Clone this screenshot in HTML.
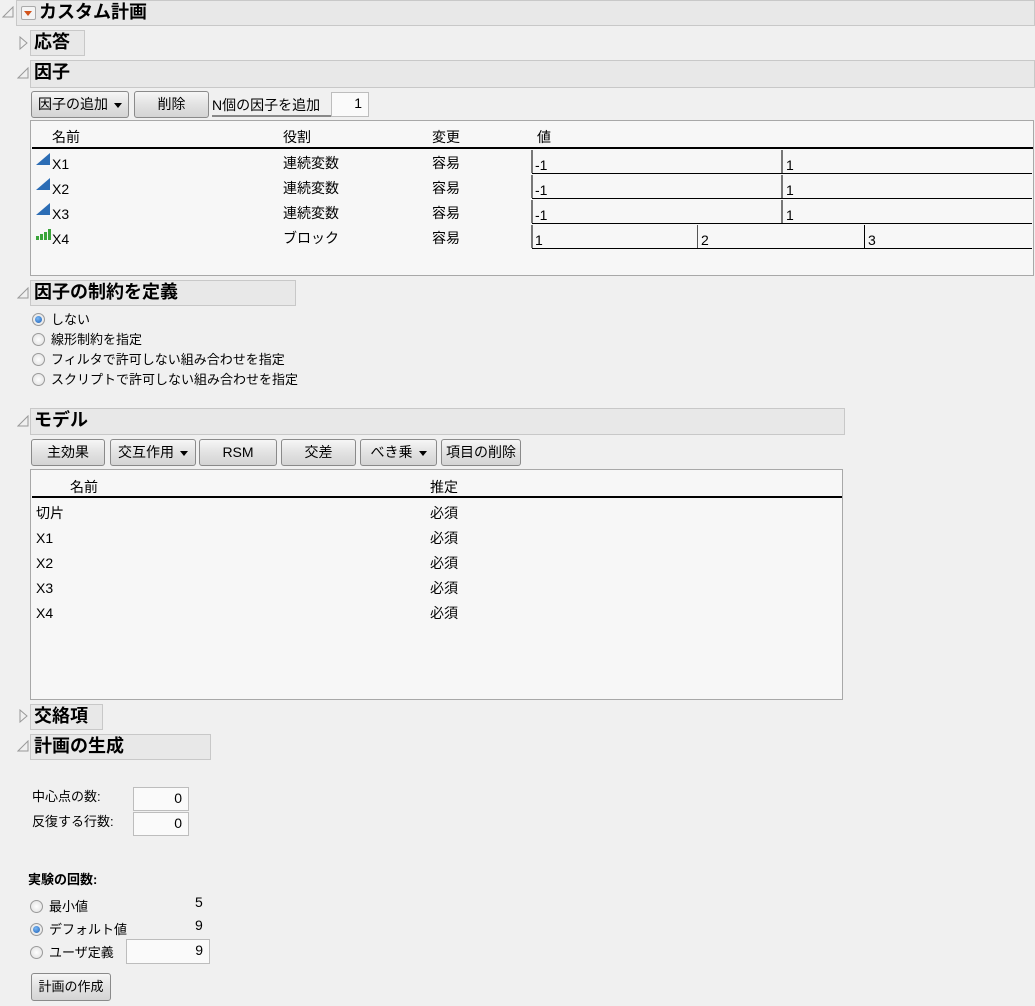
<!DOCTYPE html>
<html><head><meta charset="utf-8"><style>
*{margin:0;padding:0;box-sizing:border-box}
body{width:1035px;height:1006px;background:#f0f0f0;position:relative;overflow:hidden;font-family:"Liberation Sans","Noto Sans CJK JP",sans-serif;font-size:14px;color:#000}
.a{position:absolute;white-space:nowrap;line-height:16px}
.s{font-size:13px}
.hdr{position:absolute;background:#e8e8e8;border:1px solid #c8c8c8;font-weight:bold;font-size:18px;line-height:23px;padding-left:3px;white-space:nowrap}
.btn{position:absolute;border:1px solid #8a8a8a;border-radius:3px;background:linear-gradient(#f6f6f6,#e2e2e2 50%,#d4d4d4);text-align:center;line-height:24px;font-size:14px;white-space:nowrap}
.dd::after{content:"";display:inline-block;margin-left:6px;vertical-align:middle;border-left:4px solid transparent;border-right:4px solid transparent;border-top:5px solid #000}
.box{position:absolute;background:#f7f7f7;border:1px solid #a8a8a8}
.inp{position:absolute;background:#fafafa;border:1px solid #bdbdbd;text-align:right;padding-right:6px;line-height:21px}
.radio{position:absolute;width:13px;height:13px;border-radius:50%;border:1px solid #9a9a9a;background:radial-gradient(#fff,#ddd)}
.radio.on::after{content:"";position:absolute;left:2px;top:2px;width:7px;height:7px;border-radius:50%;background:radial-gradient(circle at 40% 35%,#7ab8f5,#1d5fb5)}
.hl{position:absolute;height:2px;background:#000}
.cl{position:absolute;height:1px;background:#000}
.vl{position:absolute;width:2px;background:#777}
</style></head><body>
<svg class="a" style="left:2px;top:6px" width="12" height="12"><path d="M11 1 L11 11 L1 11 Z" fill="none" stroke="#999"/></svg>
<div class="hdr" style="left:16px;top:0;width:1019px;height:26px;padding-left:22px">カスタム計画</div>
<div class="a" style="left:21px;top:6px;width:15px;height:14px;border:1px solid #aaa;border-radius:2px;background:#f4f4f4"></div>
<div class="a" style="left:24px;top:11px;border-left:4px solid transparent;border-right:4px solid transparent;border-top:5px solid #d2541c;line-height:0"></div>

<svg class="a" style="left:19px;top:36px" width="10" height="14"><path d="M1 1 L8 7 L1 13 Z" fill="none" stroke="#999"/></svg>
<div class="hdr" style="left:30px;top:30px;width:55px;height:26px">応答</div>

<svg class="a" style="left:17px;top:67px" width="12" height="12"><path d="M11 1 L11 11 L1 11 Z" fill="none" stroke="#999"/></svg>
<div class="hdr" style="left:30px;top:60px;width:1005px;height:28px">因子</div>
<div class="btn dd" style="left:31px;top:91px;width:98px;height:27px">因子の追加</div>
<div class="btn" style="left:134px;top:91px;width:75px;height:27px">削除</div>
<div class="a" style="left:212px;top:95px;line-height:20px;border-bottom:2px solid #888;width:119px;height:22px">N個の因子を追加</div>
<div class="inp" style="left:331px;top:92px;width:38px;height:25px">1</div>

<div class="box" style="left:30px;top:120px;width:1004px;height:156px"></div>
<div class="a" style="left:52px;top:129px">名前</div>
<div class="a" style="left:283px;top:129px">役割</div>
<div class="a" style="left:432px;top:129px">変更</div>
<div class="a" style="left:537px;top:129px">値</div>
<div class="hl" style="left:32px;top:147px;width:1001px"></div>

<svg class="a" style="left:35px;top:152px" width="16" height="14"><path d="M1 13 L15 13 L15 1 Z" fill="#2c6db5"/></svg>
<svg class="a" style="left:35px;top:177px" width="16" height="14"><path d="M1 13 L15 13 L15 1 Z" fill="#2c6db5"/></svg>
<svg class="a" style="left:35px;top:202px" width="16" height="14"><path d="M1 13 L15 13 L15 1 Z" fill="#2c6db5"/></svg>
<svg class="a" style="left:35px;top:229px" width="16" height="12"><rect x="1" y="7" width="3" height="4" fill="#3aa43a"/><rect x="5" y="5" width="3" height="6" fill="#3aa43a"/><rect x="9" y="3" width="3" height="8" fill="#3aa43a"/><rect x="13" y="0" width="3" height="11" fill="#3aa43a"/></svg>
<div class="a" style="left:52px;top:156px">X1</div><div class="a" style="left:283px;top:155px">連続変数</div><div class="a" style="left:432px;top:155px">容易</div>
<div class="a" style="left:52px;top:181px">X2</div><div class="a" style="left:283px;top:180px">連続変数</div><div class="a" style="left:432px;top:180px">容易</div>
<div class="a" style="left:52px;top:206px">X3</div><div class="a" style="left:283px;top:205px">連続変数</div><div class="a" style="left:432px;top:205px">容易</div>
<div class="a" style="left:52px;top:231px">X4</div><div class="a" style="left:283px;top:230px">ブロック</div><div class="a" style="left:432px;top:230px">容易</div>

<div class="vl" style="left:531px;top:150px;height:23px"></div><div class="vl" style="left:781px;top:150px;height:23px"></div>
<div class="vl" style="left:531px;top:175px;height:23px"></div><div class="vl" style="left:781px;top:175px;height:23px"></div>
<div class="vl" style="left:531px;top:200px;height:23px"></div><div class="vl" style="left:781px;top:200px;height:23px"></div>
<div class="vl" style="left:531px;top:225px;height:23px"></div><div class="vl" style="left:697px;top:225px;height:23px;width:1px;background:#555"></div><div class="vl" style="left:864px;top:225px;height:23px;width:1px;background:#000"></div>
<div class="cl" style="left:532px;top:173px;width:500px"></div>
<div class="cl" style="left:532px;top:198px;width:500px"></div>
<div class="cl" style="left:532px;top:223px;width:500px"></div>
<div class="cl" style="left:532px;top:248px;width:500px"></div>
<div class="a" style="left:535px;top:157px">-1</div><div class="a" style="left:786px;top:157px">1</div>
<div class="a" style="left:535px;top:182px">-1</div><div class="a" style="left:786px;top:182px">1</div>
<div class="a" style="left:535px;top:207px">-1</div><div class="a" style="left:786px;top:207px">1</div>
<div class="a" style="left:535px;top:232px">1</div><div class="a" style="left:701px;top:232px">2</div><div class="a" style="left:868px;top:232px">3</div>

<svg class="a" style="left:17px;top:287px" width="12" height="12"><path d="M11 1 L11 11 L1 11 Z" fill="none" stroke="#999"/></svg>
<div class="hdr" style="left:30px;top:280px;width:266px;height:26px">因子の制約を定義</div>
<div class="radio on" style="left:32px;top:313px"></div><div class="a s" style="left:51px;top:312px">しない</div>
<div class="radio" style="left:32px;top:333px"></div><div class="a s" style="left:51px;top:332px">線形制約を指定</div>
<div class="radio" style="left:32px;top:353px"></div><div class="a s" style="left:51px;top:352px">フィルタで許可しない組み合わせを指定</div>
<div class="radio" style="left:32px;top:373px"></div><div class="a s" style="left:51px;top:372px">スクリプトで許可しない組み合わせを指定</div>

<svg class="a" style="left:17px;top:415px" width="12" height="12"><path d="M11 1 L11 11 L1 11 Z" fill="none" stroke="#999"/></svg>
<div class="hdr" style="left:30px;top:408px;width:815px;height:27px">モデル</div>
<div class="btn" style="left:31px;top:439px;width:74px;height:27px">主効果</div>
<div class="btn dd" style="left:110px;top:439px;width:86px;height:27px">交互作用</div>
<div class="btn" style="left:199px;top:439px;width:78px;height:27px">RSM</div>
<div class="btn" style="left:281px;top:439px;width:75px;height:27px">交差</div>
<div class="btn dd" style="left:360px;top:439px;width:77px;height:27px">べき乗</div>
<div class="btn" style="left:441px;top:439px;width:80px;height:27px">項目の削除</div>

<div class="box" style="left:30px;top:469px;width:813px;height:231px"></div>
<div class="a" style="left:70px;top:479px">名前</div>
<div class="a" style="left:430px;top:479px">推定</div>
<div class="hl" style="left:32px;top:496px;width:810px"></div>
<div class="a" style="left:36px;top:505px">切片</div><div class="a" style="left:430px;top:505px">必須</div>
<div class="a" style="left:36px;top:530px">X1</div><div class="a" style="left:430px;top:530px">必須</div>
<div class="a" style="left:36px;top:555px">X2</div><div class="a" style="left:430px;top:555px">必須</div>
<div class="a" style="left:36px;top:580px">X3</div><div class="a" style="left:430px;top:580px">必須</div>
<div class="a" style="left:36px;top:605px">X4</div><div class="a" style="left:430px;top:605px">必須</div>

<svg class="a" style="left:19px;top:709px" width="10" height="14"><path d="M1 1 L8 7 L1 13 Z" fill="none" stroke="#999"/></svg>
<div class="hdr" style="left:30px;top:704px;width:73px;height:26px">交絡項</div>
<svg class="a" style="left:17px;top:740px" width="12" height="12"><path d="M11 1 L11 11 L1 11 Z" fill="none" stroke="#999"/></svg>
<div class="hdr" style="left:30px;top:734px;width:181px;height:26px">計画の生成</div>

<div class="a s" style="left:32px;top:789px">中心点の数:</div>
<div class="inp" style="left:133px;top:787px;width:56px;height:24px">0</div>
<div class="a s" style="left:32px;top:814px">反復する行数:</div>
<div class="inp" style="left:133px;top:812px;width:56px;height:24px">0</div>

<div class="a s" style="left:28px;top:872px;font-weight:bold">実験の回数:</div>
<div class="radio" style="left:30px;top:900px"></div><div class="a s" style="left:49px;top:899px">最小値</div><div class="a" style="left:195px;top:894px">5</div>
<div class="radio on" style="left:30px;top:923px"></div><div class="a s" style="left:49px;top:922px">デフォルト値</div><div class="a" style="left:195px;top:917px">9</div>
<div class="radio" style="left:30px;top:946px"></div><div class="a s" style="left:49px;top:945px">ユーザ定義</div>
<div class="inp" style="left:126px;top:939px;width:84px;height:25px">9</div>
<div class="btn s" style="left:31px;top:973px;width:80px;height:28px;line-height:26px;font-size:13px">計画の作成</div>
</body></html>
